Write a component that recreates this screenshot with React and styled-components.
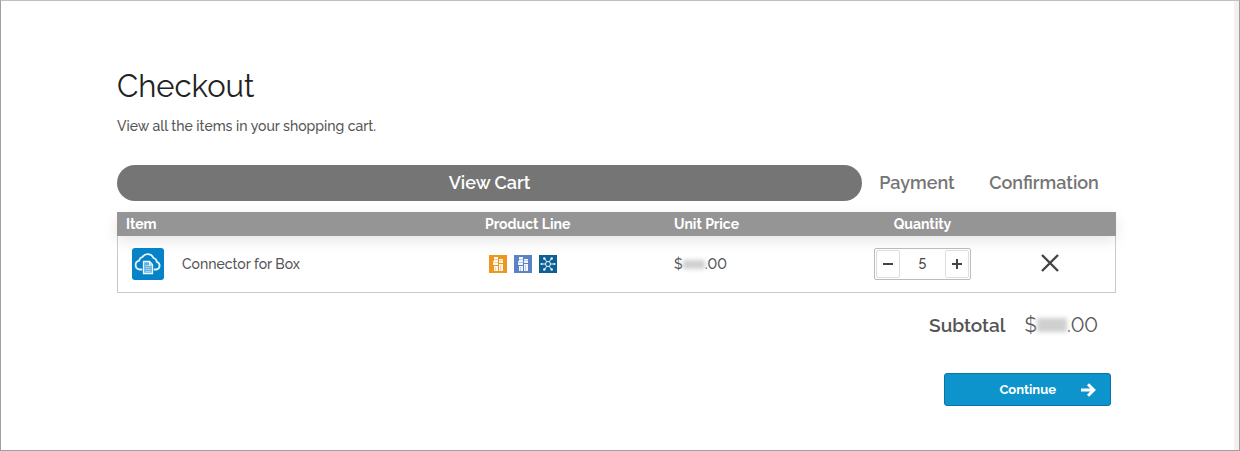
import React, { useState } from "react";
import styled, { createGlobalStyle } from "styled-components";

const GlobalStyle = createGlobalStyle`
  * {
    box-sizing: border-box;
  }
  body {
    margin: 0;
    background: #fff;
    color: #555;
    font-family: Raleway, Lato, sans-serif;
    font-size: 14px;
    font-weight: 500;
    font-variant-numeric: lining-nums;
  }
`;

const Page = styled.div`
  min-height: 100vh;
  padding: 65px 123px 44px 116px;
  border: 1px solid #a0a0a0;
  border-top-color: #c0c0c0;
  box-shadow: inset -5px 0 0 #f1f1f1;
`;

const Title = styled.h1`
  margin: 0;
  color: #222;
  font-size: 31px;
  font-weight: 400;
  line-height: 40px;
`;

const Intro = styled.p`
  margin: 10px 0 28px;
  line-height: 21px;
`;

const Steps = styled.ol`
  display: flex;
  margin: 0 0 11px;
  padding: 0;
  list-style: none;
`;

const Step = styled.li`
  flex: ${(props) => (props.$active ? "1" : `0 0 ${props.$width}px`)};
  border-radius: 18px;
  background: ${(props) => (props.$active ? "#757575" : "transparent")};
  color: ${(props) => (props.$active ? "#fff" : "#757575")};
  font-size: 18px;
  font-weight: 600;
  line-height: 36px;
  text-align: center;
`;

const CartTable = styled.table`
  width: 100%;
  table-layout: fixed;
  border-spacing: 0;
`;

const Col = styled.col`
  width: ${(props) => props.$width};
`;

const Head = styled.thead`
  background: #959595;
  box-shadow: 0 5px 14px rgba(0, 0, 0, 0.1);
`;

const HeadCell = styled.th`
  height: 24px;
  padding: 0 9px;
  color: #fff;
  font-weight: 700;
  line-height: 24px;
  text-align: ${(props) => props.$align || "left"};
`;

const Cell = styled.td`
  height: 57px;
  padding: 0 9px;
  border-bottom: 1px solid #c8c8c8;
  text-align: ${(props) => props.$align || "left"};

  &:first-child {
    border-left: 1px solid #c8c8c8;
  }
  &:last-child {
    border-right: 1px solid #c8c8c8;
  }
`;

const Product = styled.div`
  display: flex;
  align-items: center;
  gap: 18px;
  padding-left: 5px;
`;

const ProductLines = styled.div`
  display: flex;
  gap: 7px;
  padding-left: 4px;
`;

const Price = styled.span`
  display: inline-flex;
  align-items: center;
`;

const Hidden = styled.span`
  width: ${(props) => props.$width}px;
  height: ${(props) => props.$height}px;
  background: #cfcfcf;
  filter: blur(2px);
`;

const Stepper = styled.div`
  display: inline-flex;
  width: 97px;
  height: 32px;
  padding: 1px;
  border: 1px solid #bbb;
  border-radius: 2px;
  vertical-align: middle;
`;

const StepButton = styled.button`
  display: flex;
  align-items: center;
  justify-content: center;
  flex: 0 0 24px;
  padding: 0;
  border: 1px solid #ddd;
  border-radius: 2px;
  background: #fff;
  cursor: pointer;
`;

const QuantityInput = styled.input`
  flex: 1;
  min-width: 0;
  padding: 0;
  border: 0;
  background: transparent;
  color: #444;
  font: inherit;
  text-align: center;
`;

const RemoveButton = styled.button`
  display: inline-flex;
  padding: 0 0 2px;
  border: 0;
  background: transparent;
  vertical-align: middle;
  cursor: pointer;
`;

const Subtotal = styled.div`
  display: flex;
  align-items: center;
  justify-content: flex-end;
  gap: 19px;
  padding: 20px 18px 0 0;
  font-size: 19px;
  line-height: 24px;
`;

const SubtotalLabel = styled.span`
  font-weight: 600;
`;

const Amount = styled.span`
  display: inline-flex;
  align-items: center;
  font-size: 20px;
  font-weight: 400;
`;

const Actions = styled.div`
  display: flex;
  justify-content: flex-end;
  padding: 36px 5px 0 0;
`;

const ContinueButton = styled.button`
  display: flex;
  align-items: center;
  justify-content: flex-end;
  gap: 24px;
  width: 167px;
  height: 33px;
  padding: 0 14px;
  border: 1px solid #0a74a2;
  border-radius: 3px;
  background: #0d94cc;
  color: #fff;
  font-family: inherit;
  font-size: 13px;
  font-weight: 700;
  cursor: pointer;
`;

const CloudIcon = () => (
  <svg width="32" height="32" viewBox="0 0 32 32" fill="none" aria-hidden="true">
    <rect width="32" height="32" rx="3" fill="#0583c9" />
    <path
      d="M9.500 21.500H8a4.500 4.500 0 0 1-.8-8.900A4.600 4.600 0 0 1 10.500 9 6.200 6.200 0 0 1 21.500 10a4.500 4.500 0 0 1 3.300 3.800A4 4 0 0 1 24.500 21.500h-2"
      stroke="#e6f4fb"
      strokeWidth="1.800"
      strokeLinecap="round"
    />
    <path d="M11.500 13.500h6l3 3V25.500h-9z" fill="#5fb2e0" stroke="#f3fafd" strokeWidth="1.300" />
    <path d="M13.500 17.500h5M13.500 19.500h5M13.500 21.500h5M13.500 23.500h5" stroke="#d9effa" strokeOpacity=".6" />
    <path d="M17.500 13.500V17H21" stroke="#f3fafd" />
  </svg>
);

const ServerIcon = ({ color, label }) => (
  <svg width="18" height="18" viewBox="0 0 18 18" role="img" aria-label={label}>
    <rect width="18" height="18" fill={color} />
    <path d="M5 2h4v4H5zM4 6h5v4H4zM5 11h4v5H5zM10 4h4v4h-4zM10 9h4v7h-4z" fill="#fff" fillOpacity=".92" />
    <path d="M5 4.500h4M4 7.500h5M10 5.500h4M6.500 12v4M11.500 10v6" stroke={color} strokeOpacity=".35" />
  </svg>
);

const HubIcon = () => (
  <svg width="18" height="18" viewBox="0 0 18 18" role="img" aria-label="Hub">
    <rect width="18" height="18" fill="#0e5f94" />
    <g fill="none" stroke="#e8f4fa" strokeWidth="1">
      <circle cx="9" cy="9" r="2.500" />
      <path d="M2.500 9h4M11.500 9h4M5.500 3.500l2.300 3.300M12.500 3.500l-2.300 3.300M5.500 14.500l2.300-3.300M12.500 14.500l-2.300-3.300" />
    </g>
    <g fill="#e8f4fa">
      <circle cx="2.500" cy="9" r="1" />
      <circle cx="15.500" cy="9" r="1" />
      <circle cx="5.300" cy="3.500" r="1.200" />
      <circle cx="12.700" cy="3.500" r="1.200" />
      <circle cx="5.300" cy="14.500" r="1.200" />
      <circle cx="12.700" cy="14.500" r="1.200" />
    </g>
  </svg>
);

const App = () => {
  const [quantity, setQuantity] = useState(5);

  return (
    <>
      <GlobalStyle />
      <Page>
        <Title>Checkout</Title>
        <Intro>View all the items in your shopping cart.</Intro>
        <Steps>
          <Step $active aria-current="step">View Cart</Step>
          <Step $width={110}>Payment</Step>
          <Step $width={144}>Confirmation</Step>
        </Steps>
        <CartTable>
          <colgroup>
            <Col $width="auto" />
            <Col $width="189px" />
            <Col $width="195px" />
            <Col $width="125px" />
            <Col $width="131px" />
          </colgroup>
          <Head>
            <tr>
              <HeadCell>Item</HeadCell>
              <HeadCell>Product Line</HeadCell>
              <HeadCell>Unit Price</HeadCell>
              <HeadCell $align="center">Quantity</HeadCell>
              <HeadCell aria-label="Remove" />
            </tr>
          </Head>
          <tbody>
            <tr>
              <Cell>
                <Product>
                  <CloudIcon />
                  <span>Connector for Box</span>
                </Product>
              </Cell>
              <Cell>
                <ProductLines>
                  <ServerIcon color="#ec971f" label="Server" />
                  <ServerIcon color="#5b82c4" label="Cloud" />
                  <HubIcon />
                </ProductLines>
              </Cell>
              <Cell>
                <Price>
                  $<Hidden $width={22} $height={9} />.00
                </Price>
              </Cell>
              <Cell $align="center">
                <Stepper>
                  <StepButton aria-label="Decrease quantity" onClick={() => setQuantity(Math.max(1, quantity - 1))}>
                    <svg width="10" height="10" viewBox="0 0 10 10">
                      <path d="M0 5h10" stroke="#444" strokeWidth="2" />
                    </svg>
                  </StepButton>
                  <QuantityInput
                    aria-label="Quantity"
                    value={quantity}
                    onChange={(e) => setQuantity(Number(e.target.value) || 1)}
                  />
                  <StepButton aria-label="Increase quantity" onClick={() => setQuantity(quantity + 1)}>
                    <svg width="10" height="10" viewBox="0 0 10 10">
                      <path d="M0 5h10M5 0v10" stroke="#444" strokeWidth="2" />
                    </svg>
                  </StepButton>
                </Stepper>
              </Cell>
              <Cell $align="center">
                <RemoveButton aria-label="Remove item">
                  <svg width="18" height="18" viewBox="0 0 18 18">
                    <path d="M1 1l16 16M17 1L1 17" stroke="#444" strokeWidth="2.400" />
                  </svg>
                </RemoveButton>
              </Cell>
            </tr>
          </tbody>
        </CartTable>
        <Subtotal>
          <SubtotalLabel>Subtotal</SubtotalLabel>
          <Amount>
            $<Hidden $width={30} $height={14} />.00
          </Amount>
        </Subtotal>
        <Actions>
          <ContinueButton>
            Continue
            <svg width="16" height="14" viewBox="0 0 16 14" fill="none" aria-hidden="true">
              <path d="M1 7h12.500M8 1.200L13.800 7 8 12.800" stroke="#fff" strokeWidth="3" />
            </svg>
          </ContinueButton>
        </Actions>
      </Page>
    </>
  );
};

export default App;
